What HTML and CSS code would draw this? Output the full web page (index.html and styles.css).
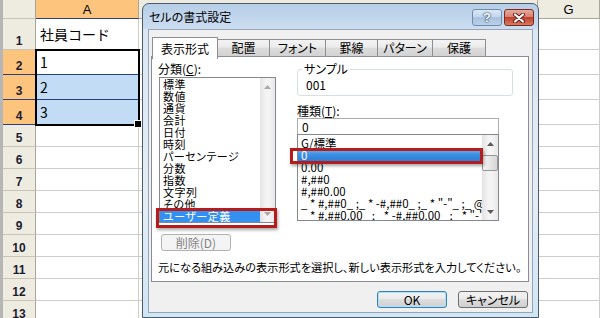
FILE: index.html
```html
<!DOCTYPE html>
<html lang="ja">
<head>
    <meta charset="UTF-8">
    <title>セルの書式設定</title>
    <link rel="stylesheet" href="styles.css">
</head>
<body>

    <!-- ワークシート -->
    <div class="sheet">
        <div class="row head">
            <div class="rh corner"></div>
            <div class="c ch on">A</div>
            <div class="c ch"></div>
            <div class="c ch">G</div>
        </div>
        <div class="row tall">
            <div class="rh">1</div>
            <div class="c">社員コード</div>
            <div class="c"></div>
            <div class="c"></div>
        </div>
        <div class="row mid">
            <div class="rh on">2</div>
            <div class="c pick active">1</div>
            <div class="c"></div>
            <div class="c"></div>
        </div>
        <div class="row mid">
            <div class="rh on">3</div>
            <div class="c pick">2</div>
            <div class="c"></div>
            <div class="c"></div>
        </div>
        <div class="row mid">
            <div class="rh on">4</div>
            <div class="c pick">3</div>
            <div class="c"></div>
            <div class="c"></div>
        </div>
        <div class="row"><div class="rh">5</div><div class="c"></div><div class="c"></div><div class="c"></div></div>
        <div class="row"><div class="rh">6</div><div class="c"></div><div class="c"></div><div class="c"></div></div>
        <div class="row"><div class="rh">7</div><div class="c"></div><div class="c"></div><div class="c"></div></div>
        <div class="row"><div class="rh">8</div><div class="c"></div><div class="c"></div><div class="c"></div></div>
        <div class="row"><div class="rh">9</div><div class="c"></div><div class="c"></div><div class="c"></div></div>
        <div class="row"><div class="rh">10</div><div class="c"></div><div class="c"></div><div class="c"></div></div>
        <div class="row"><div class="rh">11</div><div class="c"></div><div class="c"></div><div class="c"></div></div>
        <div class="row"><div class="rh">12</div><div class="c"></div><div class="c"></div><div class="c"></div></div>
        <div class="row"><div class="rh">13</div><div class="c"></div><div class="c"></div><div class="c"></div></div>
    </div>

    <!-- 選択範囲 A2:A4 -->
    <div class="sel"></div>

    <!-- セルの書式設定ダイアログ -->
    <div class="dialog">
        <div class="title">
            <span class="caption">セルの書式設定</span>
            <div class="tbtns">
                <span class="tb help">?</span>
                <span class="tb close">
                    <svg width="14" height="10" viewBox="0 0 14 10">
                        <path d="M3 1.5 L11 8.5 M11 1.5 L3 8.5" stroke="#5b1a12" stroke-width="4" stroke-linecap="round"/>
                        <path d="M3 1.5 L11 8.5 M11 1.5 L3 8.5" stroke="#fff" stroke-width="2.2" stroke-linecap="round"/>
                    </svg>
                </span>
            </div>
        </div>

        <div class="client">
            <div class="tabs">
                <span class="tab sel-tab" style="width:66px">表示形式</span>
                <span class="tab" style="width:52px">配置</span>
                <span class="tab" style="width:56px">フォント</span>
                <span class="tab" style="width:52px">罫線</span>
                <span class="tab" style="width:55px">パターン</span>
                <span class="tab" style="width:53px">保護</span>
            </div>

            <div class="panel">
                <div class="cols">
                    <div class="left">
                        <div class="lbl">分類(<u>C</u>):</div>
                        <div class="list cat">
                            <ul class="items">
                                <li>標準</li>
                                <li>数値</li>
                                <li>通貨</li>
                                <li>会計</li>
                                <li>日付</li>
                                <li>時刻</li>
                                <li>パーセンテージ</li>
                                <li>分数</li>
                                <li>指数</li>
                                <li>文字列</li>
                                <li>その他</li>
                                <li class="hl">ユーザー定義</li>
                            </ul>
                            <div class="sbar off">
                                <span class="arr"><svg width="7" height="4" viewBox="0 0 7 4"><path d="M0 4 L3.5 0 L7 4Z"/></svg></span>
                                <span class="arr"><svg width="7" height="4" viewBox="0 0 7 4"><path d="M0 0 L7 0 L3.5 4Z"/></svg></span>
                            </div>
                            <div class="mark cat-mark"></div>
                        </div>
                        <button class="btn off del">削除(D)</button>
                    </div>

                    <div class="right">
                        <fieldset class="sample">
                            <legend>サンプル</legend>
                            <div class="sample-val">001</div>
                        </fieldset>
                        <div class="lbl kind">種類(<u>T</u>):</div>
                        <div class="input">0</div>
                        <div class="list fmt">
                            <ul class="items">
                                <li>G/標準</li>
                                <li class="hl2">0</li>
                                <li>0.00</li>
                                <li>#,##0</li>
                                <li>#,##0.00</li>
                                <li>_ * #,##0_ ;_ * -#,##0_ ;_ * "-"_ ;_ @_</li>
                                <li>_ * #,##0.00_ ;_ * -#,##0.00_ ;_ * "-"??_ ;_ @_</li>
                            </ul>
                            <div class="sbar">
                                <span class="arr"><svg width="7" height="4" viewBox="0 0 7 4"><path d="M0 4 L3.5 0 L7 4Z"/></svg></span>
                                <span class="thumb"></span>
                                <span class="gap"></span>
                                <span class="arr"><svg width="7" height="4" viewBox="0 0 7 4"><path d="M0 0 L7 0 L3.5 4Z"/></svg></span>
                            </div>
                            <div class="mark fmt-mark"></div>
                        </div>
                    </div>
                </div>
                <p class="hint">元になる組み込みの表示形式を選択し、新しい表示形式を入力してください。</p>
            </div>

            <div class="actions">
                <button class="btn ok">OK</button>
                <button class="btn">キャンセル</button>
            </div>
        </div>
    </div>

</body>
</html>
```

FILE: styles.css
```css
* {
    margin: 0;
    padding: 0;
    box-sizing: border-box;
}

body {
    width: 600px;
    height: 318px;
    overflow: hidden;
    position: relative;
    background: #fff;
    font-family: "Noto Sans CJK JP", sans-serif;
    color: #000;
}

/* ワークシート */
.sheet {
    border-left: 3px solid #b6b6b6;
}

.row {
    display: grid;
    grid-template-columns: 33px 103px 399px 1fr;
    height: 22px;
}

.row.head { height: 19px; }
.row.tall { height: 31px; }
.row.mid  { height: 25px; }

.rh {
    display: flex;
    align-items: flex-end;
    justify-content: center;
    padding-bottom: 2px;
    background: #eeebe1;
    border-right: 1px solid #a9a697;
    border-bottom: 1px solid #c9c5b6;
    font: bold 12px/12px "Liberation Sans", sans-serif;
    color: #1c1c30;
}

.rh.on {
    background: #fcc47c;
    border-bottom-color: #2b3f7e;
}

.c {
    display: flex;
    align-items: center;
    padding-left: 4px;
    border-right: 1px solid #cdcdcd;
    border-bottom: 1px solid #cdcdcd;
    font-size: 14px;
    line-height: 14px;
}

.c.ch {
    justify-content: center;
    padding: 0;
    background: #eeebe1;
    border-right-color: #a9a697;
    border-bottom-color: #a9a697;
    font: 13px/13px "Liberation Sans", sans-serif;
}

.c.ch.on {
    background: #fcc47c;
    border-bottom-color: #2b3f7e;
}

.c.pick {
    background: #c3dcf6;
    border-bottom-color: #2b3f7e;
}

.c.pick.active {
    background: #fff;
}

/* 選択範囲の太枠 */
.sel {
    position: absolute;
    left: 35px;
    top: 49px;
    width: 105px;
    height: 77px;
    border: 2px solid #000;
}

.sel::after {
    content: "";
    position: absolute;
    right: -4px;
    bottom: -4px;
    width: 6px;
    height: 6px;
    background: #000;
    border: 1px solid #fff;
}

/* ダイアログ */
.dialog {
    position: absolute;
    left: 142px;
    top: 3px;
    width: 397px;
    height: 315px;
    display: flex;
    flex-direction: column;
    padding: 0 5px 4px;
    border: 1px solid #4f5b69;
    border-radius: 7px 7px 0 0;
    background: linear-gradient(#b6cee8, #cadcf0 24px, #dbe7f3 26px, #e4edf6 60%, #cfe6f4);
    font-size: 12px;
    line-height: 12px;
    font-feature-settings: "palt";
}

.title {
    height: 25px;
    display: flex;
    justify-content: space-between;
    align-items: flex-start;
}

.caption {
    padding-left: 1px;
    line-height: 25px;
}

.tbtns {
    display: flex;
    gap: 2px;
    margin-top: 5px;
    margin-right: -1px;
}

.tb {
    width: 30px;
    height: 17px;
    display: flex;
    align-items: center;
    justify-content: center;
    border-radius: 3px;
}

.help {
    border: 1px solid #6f8cab;
    background: linear-gradient(#dbe7f4, #c4d7ec 45%, #a9c2de 50%, #b9d0e8);
    color: #fff;
    font: bold 13px/13px "Liberation Sans", sans-serif;
    text-shadow: 0 0 1px #2c4a6b, 0 0 1px #2c4a6b, 0 0 2px #2c4a6b;
}

.close {
    border: 1px solid #7a2b22;
    background: linear-gradient(#e9a99f, #d88170 45%, #c2402d 50%, #d77a63);
}

.client {
    flex: 1;
    display: flex;
    flex-direction: column;
    padding: 6px 4px 0 2px;
    background: #f0f0f0;
    border: 1px solid #95a5b7;
}

.tabs {
    display: flex;
    align-items: flex-start;
    height: 21px;
    margin-left: 1px;
    position: relative;
    z-index: 1;
}

.tab {
    height: 18px;
    margin-top: 3px;
    display: flex;
    align-items: center;
    justify-content: center;
    border: 1px solid #8c8e94;
    border-left: none;
    background: linear-gradient(#f3f3f3, #ebebeb 45%, #dcdcdc 50%, #d2d2d2);
}

.tab.sel-tab {
    height: 22px;
    margin-top: 1px;
    border-left: 1px solid #8c8e94;
    border-bottom: none;
    background: #fff;
}

.panel {
    width: 378px;
    height: 226px;
    margin-top: -1px;
    padding: 6px 0 0 6px;
    border: 1px solid #898c95;
    background: #fff;
}

.cols {
    display: flex;
    gap: 20px;
}

.left {
    width: 119px;
}

.right {
    width: 216px;
}

.lbl {
    height: 14px;
    line-height: 12px;
}

.lbl.kind {
    height: 13px;
    margin-top: 9px;
}

.list {
    position: relative;
    display: flex;
    background: #fff;
    border: 1px solid #828790;
}

.list.cat {
    width: 117px;
    height: 146px;
    margin-left: 1px;
}

.list.fmt {
    width: 202px;
    height: 87px;
    margin-top: -1px;
}

.items {
    flex: 1;
    min-width: 0;
    overflow: hidden;
    list-style: none;
}

.cat .items {
    overflow: visible;
    font-size: 11px;
    letter-spacing: 0.5px;
}

.fmt .items {
    padding-top: 2px;
    font-size: 11.5px;
}

.items li {
    height: 12px;
    line-height: 12px;
    padding-left: 3px;
    white-space: nowrap;
}

.items li.hl {
    background: #3390f0;
    color: #fff;
}

.items li.hl2 {
    background: linear-gradient(#6cb6f6, #3a8de2 50%, #2b7fd8);
    color: #fff;
}

.sbar {
    width: 16px;
    flex: none;
    display: flex;
    flex-direction: column;
    justify-content: space-between;
    background: linear-gradient(90deg, #e3e3e3, #f4f4f4 40%, #f4f4f4 60%, #e8e8e8);
}

.cat .sbar {
    width: 15px;
}

.arr {
    height: 17px;
    display: flex;
    align-items: center;
    justify-content: center;
}

.arr svg {
    fill: #5a5a5a;
}

.sbar.off .arr svg {
    fill: #a8a8a8;
}

.thumb {
    height: 16px;
    margin-top: 3px;
    border: 1px solid #989898;
    border-radius: 2px;
    background: linear-gradient(90deg, #f4f4f4, #e6e6e6 50%, #d6d6d6);
}

.gap {
    flex: 1;
}

/* 赤枠の強調 */
.mark {
    position: absolute;
    border: 3px solid #b51c1c;
    box-shadow: 1px 2px 3px rgba(0, 0, 0, 0.35);
}

.cat-mark {
    left: -4px;
    top: 130px;
    width: 121px;
    height: 20px;
}

.fmt-mark {
    left: -8px;
    top: 13px;
    width: 193px;
    height: 16px;
}

.sample {
    border: 1px solid #d5dfe5;
    border-radius: 3px;
    padding: 0 8px 3px;
    min-width: 0;
}

.sample legend {
    margin-left: -4px;
    padding: 0 2px;
    line-height: 12px;
}

.sample-val {
    margin-top: 3px;
    line-height: 14px;
}

.input {
    height: 17px;
    width: 202px;
    padding-left: 4px;
    line-height: 15px;
    border: 1px solid #abadb3;
    background: #fff;
}

.hint {
    margin-top: 10px;
    font-size: 11.2px;
    line-height: 13px;
    white-space: nowrap;
}

.btn {
    width: 70px;
    height: 17px;
    border: 1px solid #707070;
    border-radius: 3px;
    background: linear-gradient(#f2f2f2, #ebebeb 45%, #dddddd 50%, #cfcfcf);
    font: inherit;
    font-feature-settings: "palt";
    line-height: 15px;
    color: #000;
}

.btn.del {
    margin: 11px 0 0 3px;
}

.btn.off {
    border-color: #adb2b5;
    background: #f4f4f4;
    color: #838383;
}

.btn.ok {
    border-color: #3c7fb1;
    box-shadow: inset 0 0 0 1px #a6e4fb;
}

.actions {
    display: flex;
    justify-content: flex-end;
    gap: 11px;
    margin-top: 9px;
}
```
